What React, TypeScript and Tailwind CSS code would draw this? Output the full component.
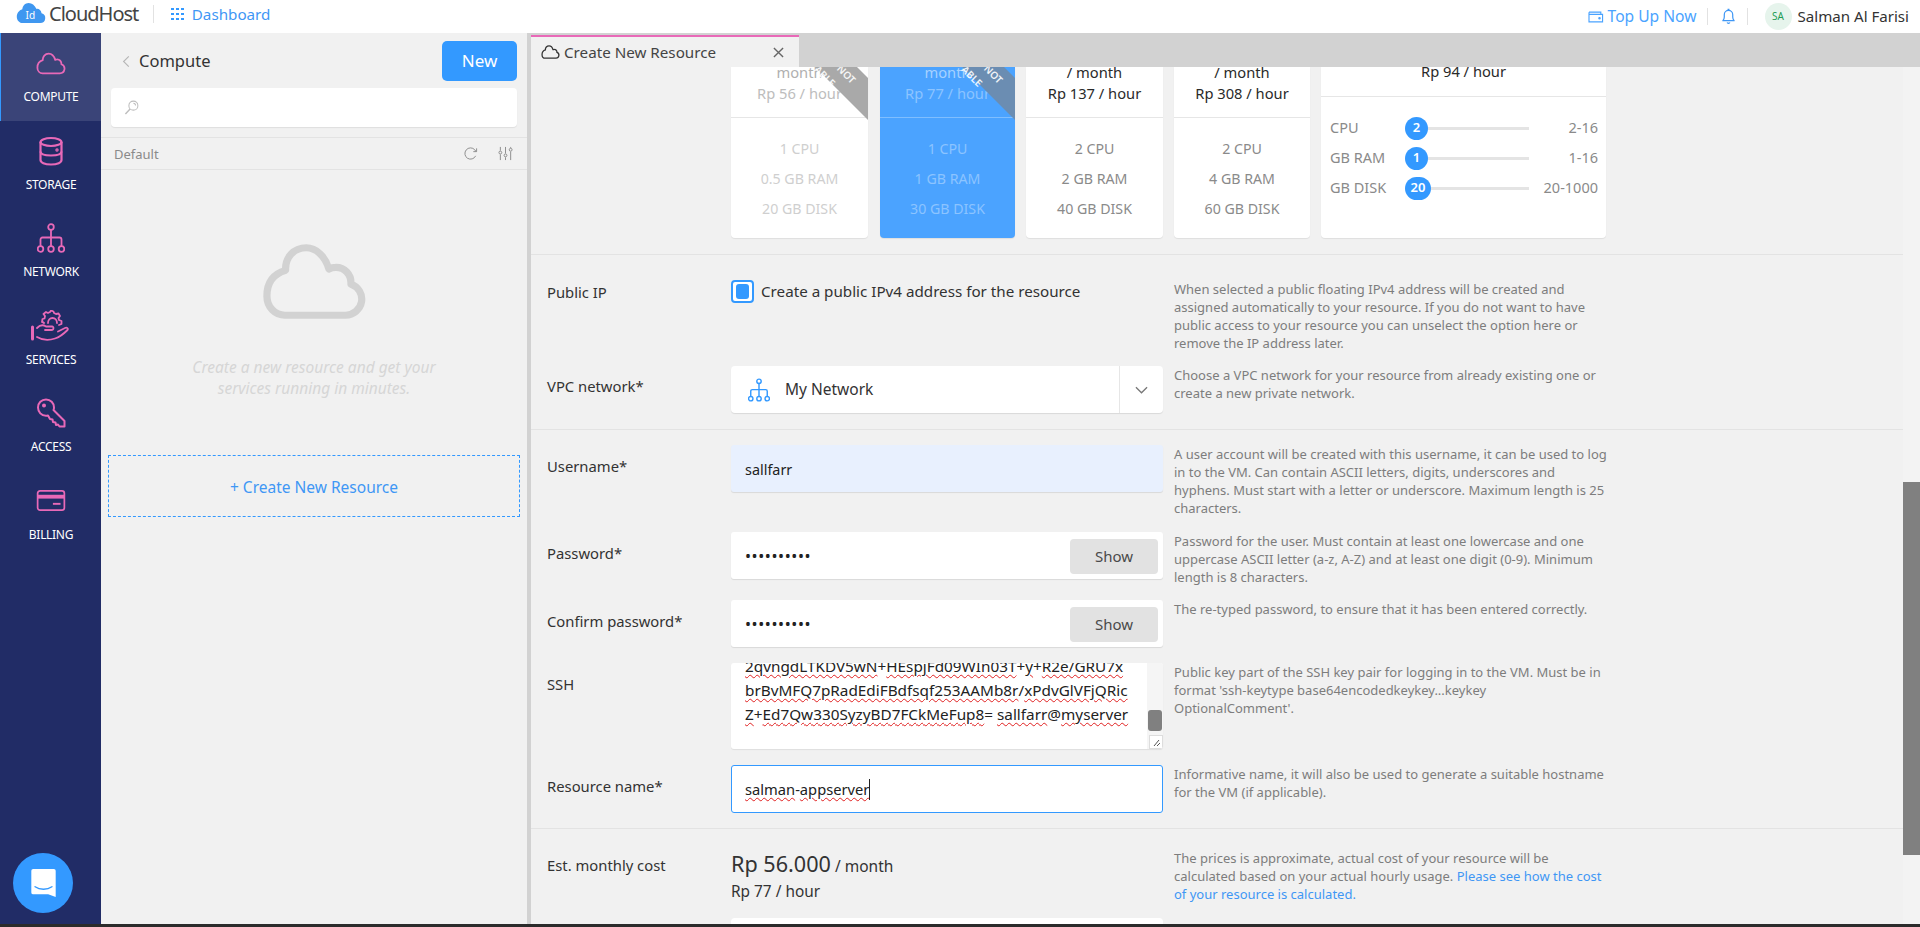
import React from "react";

const P = "#e869b8";

function CloudIcon({ className, color = P, sw = 2, stretch }: { className?: string; color?: string; sw?: number; stretch?: boolean }) {
  return (
    <svg viewBox="0 0 32 24" preserveAspectRatio={stretch ? "none" : undefined} className={className} fill="none" stroke={color} strokeWidth={sw} strokeLinejoin="round" strokeLinecap="round">
      <path d="M7 22.500h18.500a5 5 0 0 0 1.600-9.700c.2-3-2-5.300-4.700-5.200-.7 0-1.400.2-2 .5C19.300 4.200 16.500 1.500 13.500 1.500c-3.800 0-6.500 3-6.300 7C3.800 9.500 1.500 12 1.500 16.500c0 3.500 2.500 6 5.500 6z" />
    </svg>
  );
}

function DiskIcon({ className }: { className?: string }) {
  return (
    <svg viewBox="0 0 24 30" className={className} fill="none" stroke={P} strokeWidth={2.2}>
      <ellipse cx="12" cy="6" rx="10.500" ry="4" />
      <path d="M1.500 6v18c0 2.500 4 4.500 10.500 4.500S22.500 26.500 22.500 24V6" />
      <path d="M1.500 15.500c0 2.500 4 4 10.500 4s10.500-1.500 10.500-4" />
      <circle cx="18" cy="14" r=".6" fill={P} />
    </svg>
  );
}

function NetIcon({ className, color = P }: { className?: string; color?: string }) {
  return (
    <svg viewBox="0 0 28 30" className={className} fill="none" stroke={color} strokeWidth={1.8}>
      <circle cx="14" cy="4" r="2.800" />
      <circle cx="3.500" cy="26" r="2.800" />
      <circle cx="14" cy="26" r="2.800" />
      <circle cx="24.500" cy="26" r="2.800" />
      <path d="M14 7v16M3.500 23v-6.500a2 2 0 0 1 2-2h17a2 2 0 0 1 2 2V23" />
    </svg>
  );
}

function ServiceIcon({ className }: { className?: string }) {
  return (
    <svg viewBox="0 0 40 32" className={className} fill="none" stroke={P} strokeWidth={1.8} strokeLinejoin="round" strokeLinecap="round">
      <path d="M1.500 17v12" strokeWidth={3} />
      <path d="M6 18c3-3 6-3.500 9-1.500h6c2 0 2 3.500-.5 3.500H14" />
      <path d="M6 27c5 3 12 3.500 18 1.500 5-1.500 9-5 12.500-8.500 1-1.500-.5-3-2.500-2l-7 3.500" />
      <path d="M13 13c-1-1-2-1-2-1l.5-3 2-.5.500-2.500-1.500-2L15 2l2 1 2-1 1-1.500 2.500 1L23 3l2 1 2.500-.5L29 6l-1.500 2 .5 2 2.500 1 0 3-2.500 1" />
      <path d="M17 13c0-3 2-5 4.500-5s4.500 2 4.500 5" />
    </svg>
  );
}

function KeyIcon({ className }: { className?: string }) {
  return (
    <svg viewBox="0 0 30 30" className={className} fill="none" stroke={P} strokeWidth={2} strokeLinejoin="round">
      <path d="M2 9.500C2 5 5.500 1.500 10 1.500s8 3.500 8 8c0 1-.1 1.800-.5 2.500L28.500 23v5.500h-5l-1.500-2-2 .5-.5-2.500-2.500-.5-.5-2.500-2.500-.5-2-3.500c-.7.2-1.300.3-2 .3C5.500 17.800 2 14 2 9.500z" />
      <circle cx="8" cy="7.500" r="1" fill={P} />
    </svg>
  );
}

function CardIcon({ className }: { className?: string }) {
  return (
    <svg viewBox="0 0 30 22" className={className} fill="none">
      <rect x="1" y="1" width="28" height="20" rx="2.500" stroke={P} strokeWidth={1.8} />
      <rect x="1" y="5" width="28" height="4" fill={P} />
      <rect x="17" y="13.500" width="8" height="2" fill={P} />
    </svg>
  );
}

function SideItem({ icon, label, active }: { icon: React.ReactNode; label: string; active?: boolean }) {
  return (
    <div className={`h-[87.5px] flex flex-col items-center pt-[12px] border-l ${active ? "bg-[#3a4478] border-[#3399ff]" : "border-transparent"}`}>
      <div className="h-[36px] flex items-center justify-center">{icon}</div>
      <div className="text-[12px] leading-[16px] text-white mt-[8px] tracking-[-0.3px]">{label}</div>
    </div>
  );
}

function Plan({ width, month, hour, cpu, ram, disk, selected, soldout }: { width: string; month: string; hour: string; cpu: string; ram: string; disk: string; selected?: boolean; soldout?: boolean }) {
  const hourTone = soldout ? (selected ? "text-[#8cc4ff]" : "text-[#bdbdbd]") : "text-[#2a2a2a]";
  const monthTone = soldout ? (selected ? "text-[#a5d1ff]" : "text-[#b0b0b0]") : "text-[#2a2a2a]";
  const specTone = soldout ? (selected ? "text-[#8cc4ff]" : "text-[#cfcfcf]") : "text-[#8a8a8a]";
  return (
    <div className={`${width} ${selected ? "bg-[#4ba3ff]" : "bg-white"} h-[171px] relative shrink-0 rounded-b-[4px] overflow-hidden shadow-[0_1px_1px_rgba(0,0,0,0.08)]`}>
      <div className={`h-[51px] overflow-hidden flex flex-col items-center justify-end pb-[13px] text-[14.7px] leading-[21px] border-b ${selected ? "border-[#7fbeff]" : "border-[#e6e6e6]"}`}>
        <div className={`shrink-0 ${monthTone}`}>{month}</div>
        <div className={`shrink-0 ${hourTone}`}>{hour}</div>
      </div>
      <div className={`flex flex-col items-center pt-[16px] text-[14.2px] leading-[30px] ${specTone}`}>
        <div>{cpu}</div>
        <div>{ram}</div>
        <div>{disk}</div>
      </div>
      {soldout && (
        <>
          <svg viewBox="0 0 53 53" className="absolute right-0 top-0 w-[53px] h-[53px]">
            <polygon points="0,0 42,0 53,11 53,53" fill={selected ? "#6b8db2" : "#a9a9a9"} />
          </svg>
          <span className="absolute right-[31px] top-[3px] text-[10px] leading-[12px] font-semibold text-white/90 rotate-45">ABLE</span>
          <span className="absolute right-[11px] top-[1px] text-[10px] leading-[12px] font-semibold text-white/90 rotate-45">NOT</span>
        </>
      )}
    </div>
  );
}

function Slider({ label, value, range, wide }: { label: string; value: string; range: string; wide?: boolean }) {
  return (
    <div className="h-[30px] flex items-center text-[14.5px] text-[#8a8a8a]">
      <div className="w-[84px] pl-[9px]">{label}</div>
      <div className="relative w-[124px] h-[3px] bg-[#e4e4e4]">
        <div className={`absolute left-0 top-[-10px] h-[23px] ${wide ? "w-[26px]" : "w-[23px]"} rounded-full bg-[#3399ff] text-white text-[13px] font-semibold flex items-center justify-center`}>{value}</div>
      </div>
      <div className="flex-1 text-right pr-[8px]">{range}</div>
    </div>
  );
}

function Row({ label, labelClass, children, help, height }: { label: string; labelClass: string; children: React.ReactNode; help?: React.ReactNode; height: string }) {
  return (
    <div className={`flex ${height}`}>
      <div className={`w-[200px] shrink-0 pl-[16px] text-[14.8px] text-[#333333] leading-[20px] ${labelClass}`}>{label}</div>
      <div className="w-[432px] shrink-0">{children}</div>
      <div className="w-[460px] shrink-0 pl-[11px] text-[13px] leading-[18px] text-[#7d7d7d]">{help}</div>
    </div>
  );
}

function Hr() {
  return <div className="w-full h-px bg-[#e3e3e3]" />;
}

function PasswordField() {
  return (
    <div className="h-[47px] bg-white rounded-[3px] flex items-center shadow-[0_1px_1px_rgba(0,0,0,0.1)]">
      <div className="flex-1 pl-[14px] text-[16px] tracking-[0.6px] leading-none text-[#222222]">••••••••••</div>
      <div className="w-[88px] h-[35px] mt-[1px] mr-[5px] bg-[#e2e2e2] rounded-[4px] flex items-center justify-center text-[15px] text-[#4a4a4a]">Show</div>
    </div>
  );
}

function Squiggle({ children }: { children: React.ReactNode }) {
  return <span className="underline decoration-wavy decoration-[#e02020] decoration-1 underline-offset-2">{children}</span>;
}

export default function App() {
  return (
    <div className="h-[927px] w-[1920px] flex flex-col overflow-hidden bg-[#2b2b2b] font-['Noto_Sans','Open_Sans',sans-serif]">
      <header className="h-[33px] shrink-0 bg-white flex items-center">
        <svg viewBox="0 0 32 24" className="w-[32px] h-[22px] ml-[15px] mt-[-8px] shrink-0">
          <path d="M7 23h19a5.500 5.500 0 0 0 1.500-10.800C27 9 24.500 7 22 7.500 20 3.500 17 1 13.500 1 9.500 1 7 4 6.500 8 3 9 .5 12.500.5 16c0 4 3 7 6.500 7z" fill="#3f97f0" />
          <text x="10" y="18.500" fontSize="11" fill="#ffffff" className="font-['Noto_Sans',sans-serif]">Id</text>
        </svg>
        <span className="text-[20px] tracking-[-1px] text-[#444444] ml-[2px] leading-none mt-[-6px]">CloudHost</span>
        <div className="w-px h-[18px] bg-[#e2e2e2] ml-[15px] mt-[-6px]" />
        <div className="grid grid-cols-3 gap-[2.5px] ml-[17px] mt-[-5px]">
          {Array.from({ length: 9 }).map((_, i) => (
            <div key={i} className="w-[2.5px] h-[2.5px] bg-[#3399ff]" />
          ))}
        </div>
        <span className="text-[15.2px] text-[#3f97f5] ml-[8px] mt-[-5px]">Dashboard</span>
        <div className="flex-1" />
        <svg viewBox="0 0 18 16" className="w-[16px] h-[14px]" fill="none" stroke="#4aa3ff" strokeWidth="1.3">
          <path d="M1 2.500h13.500V5M1 2.500v11h15.500V5H1" />
          <circle cx="13" cy="9.500" r=".8" fill="#4aa3ff" />
        </svg>
        <span className="text-[15.6px] text-[#4aa3ff] ml-[4px]">Top Up Now</span>
        <div className="w-px h-[17px] bg-[#e2e2e2] ml-[10px]" />
        <svg viewBox="0 0 16 18" className="w-[15px] h-[17px] ml-[13px]" fill="none" stroke="#3f97f5" strokeWidth="1.3" strokeLinejoin="round">
          <path d="M2 13.500c1-1 1.500-2 1.500-4V7c0-2.500 2-4.500 4.500-4.500s4.500 2 4.500 4.500v2.500c0 2 .5 3 1.500 4z" />
          <path d="M7 1.500h2M6.500 15.500c.5 1 2.500 1 3 0" />
        </svg>
        <div className="w-px h-[17px] bg-[#e2e2e2] ml-[11px]" />
        <div className="w-[27px] h-[27px] rounded-full bg-[#e6f4ec] text-[#1f9d55] text-[10px] flex items-center justify-center ml-[17px]">SA</div>
        <span className="text-[15.1px] text-[#333333] ml-[6px] mr-[11px]">Salman Al Farisi</span>
      </header>

      <div className="h-[891px] shrink-0 flex">
        <nav className="w-[101px] shrink-0 bg-[#212c66] relative">
          <SideItem active label="COMPUTE" icon={<CloudIcon className="w-[30px] h-[23px]" sw={1.9} />} />
          <SideItem label="STORAGE" icon={<DiskIcon className="w-[24px] h-[30px]" />} />
          <SideItem label="NETWORK" icon={<NetIcon className="w-[28px] h-[30px]" />} />
          <SideItem label="SERVICES" icon={<ServiceIcon className="w-[40px] h-[32px]" />} />
          <SideItem label="ACCESS" icon={<KeyIcon className="w-[30px] h-[30px]" />} />
          <SideItem label="BILLING" icon={<CardIcon className="w-[30px] h-[21px]" />} />
          <div className="absolute left-[13px] bottom-[11px] w-[60px] h-[60px] rounded-full bg-[#3399ff] flex items-center justify-center">
            <svg viewBox="0 0 28 32" className="w-[27px] h-[30px]">
              <path d="M3 1h22a2 2 0 0 1 2 2v28l-8-3H3a2 2 0 0 1-2-2V3a2 2 0 0 1 2-2z" fill="#ffffff" />
              <path d="M5 20c5 3.500 13 3.500 18 0" fill="none" stroke="#3399ff" strokeWidth="1.5" strokeLinecap="round" />
            </svg>
          </div>
        </nav>

        <aside className="w-[426px] shrink-0 bg-[#f1f1f1] flex flex-col">
          <div className="h-[48px] flex items-center pt-[8px] pr-[10px]">
            <svg viewBox="0 0 10 16" className="w-[8px] h-[13px] ml-[21px]" fill="none" stroke="#b5b5b5" strokeWidth="1.4"><path d="M8.500 1.500 2 8l6.500 6.500" /></svg>
            <span className="text-[16.5px] text-[#333333] ml-[9px]">Compute</span>
            <div className="flex-1" />
            <div className="w-[75px] h-[40px] bg-[#3399ff] rounded-[5px] text-white text-[17px] flex items-center justify-center">New</div>
          </div>
          <div className="h-[39px] mt-[7px] mx-[10px] bg-white rounded-[4px] shadow-[0_1px_1px_rgba(0,0,0,0.08)] flex items-center pl-[13px]">
            <svg viewBox="0 0 16 16" className="w-[15px] h-[15px]" fill="none" stroke="#bdbdbd" strokeWidth="1.1">
              <circle cx="10" cy="6" r="4.800" /><path d="M6.500 9.500 1.500 15" strokeWidth="1.5" /><path d="M10 3.500c1.300 0 2.300 1 2.300 2.300" />
            </svg>
          </div>
          <div className="h-[33px] mt-[10px] border-y border-[#e3e3e3] flex items-center px-[13px]">
            <span className="text-[13px] text-[#8a8a8a] pt-[2px]">Default</span>
            <div className="flex-1" />
            <svg viewBox="0 0 16 16" className="w-[15px] h-[15px] mr-[20px]" fill="none" stroke="#8a8a8a" strokeWidth="1">
              <path d="M13.500 10.500A6 6 0 1 1 12.500 4L14 6M14.500 2.500V6H11" />
            </svg>
            <svg viewBox="0 0 16 16" className="w-[15px] h-[15px] mr-[1px]" fill="none" stroke="#8a8a8a" strokeWidth="1">
              <path d="M2.500 1v4M2.500 9v6M8 1v7M8 12v3M13.500 1v1M13.500 6v9" />
              <circle cx="2.500" cy="7" r="1.500" /><circle cx="8" cy="10" r="1.500" /><circle cx="13.500" cy="4" r="1.500" />
            </svg>
          </div>
          <div className="flex flex-col items-center pt-[73px]">
            <CloudIcon stretch className="w-[105px] h-[77px]" color="#d2d2d2" sw={2.2} />
            <div className="mt-[37px] text-[15.5px] leading-[21px] italic text-[#d6d6d6] text-center">
              Create a new resource and get your
              <br />
              services running in minutes.
            </div>
          </div>
          <div className="h-[62px] mt-[56px] ml-[7px] mr-[7px] border border-dashed border-[#3399ff] flex items-center justify-center pt-[4px] text-[15.5px] text-[#3f97f5]">
            + Create New Resource
          </div>
        </aside>

        <div className="w-[4px] shrink-0 bg-[#d2d2d2]" />

        <main className="flex-1 flex flex-col min-w-0 bg-[#f1f1f1]">
          <div className="h-[34px] shrink-0 bg-[#d2d2d2] flex items-end">
            <div className="w-[268px] h-[32px] bg-[#f1f1f1] border-t-2 border-[#e869b8] flex items-center pl-[10px] pr-[15px] text-[15.2px] text-[#444444]">
              <CloudIcon className="w-[19px] h-[14px]" color="#333333" sw={2.2} />
              <span className="ml-[4px]">Create New Resource</span>
              <div className="flex-1" />
              <svg viewBox="0 0 12 12" className="w-[11px] h-[11px]" fill="none" stroke="#666666" strokeWidth="1.5"><path d="M1 1l10 10M11 1 1 11" /></svg>
            </div>
          </div>

          <div className="flex-1 min-h-0 flex overflow-hidden">
            <div className="flex-1 min-w-0">
              <div className="ml-[200px] flex gap-[11px] h-[171px]">
                <Plan width="w-[137px]" soldout month="month" hour="Rp 56 / hour" cpu="1 CPU" ram="0.5 GB RAM" disk="20 GB DISK" />
                <div className="w-[135px] ml-[1px] shrink-0">
                  <Plan width="w-[135px]" soldout selected month="month" hour="Rp 77 / hour" cpu="1 CPU" ram="1 GB RAM" disk="30 GB DISK" />
                </div>
                <Plan width="w-[137px]" month="/ month" hour="Rp 137 / hour" cpu="2 CPU" ram="2 GB RAM" disk="40 GB DISK" />
                <Plan width="w-[136px]" month="/ month" hour="Rp 308 / hour" cpu="2 CPU" ram="4 GB RAM" disk="60 GB DISK" />
                <div className="w-[285px] h-[171px] shrink-0 bg-white rounded-b-[4px] shadow-[0_1px_1px_rgba(0,0,0,0.08)]">
                  <div className="h-[30px] overflow-hidden border-b border-[#e6e6e6] flex items-end justify-center pb-[15px] text-[14.7px] leading-[20px] text-[#2a2a2a]">
                    <span className="shrink-0">Rp 94 / hour</span>
                  </div>
                  <div className="pt-[16px]">
                    <Slider label="CPU" value="2" range="2-16" />
                    <Slider label="GB RAM" value="1" range="1-16" />
                    <Slider label="GB DISK" value="20" range="20-1000" wide />
                  </div>
                </div>
              </div>
              <div className="h-[16px]" />
              <Hr />

              <Row label="Public IP" labelClass="pt-[2px]" height="h-[111px] pt-[25px]" help={
                <>When selected a public floating IPv4 address will be created and<br />assigned automatically to your resource. If you do not want to have<br />public access to your resource you can unselect the option here or<br />remove the IP address later.</>
              }>
                <div className="flex items-center">
                  <div className="w-[23px] h-[23px] rounded-[4px] border-2 border-[#3399ff] bg-white flex items-center justify-center">
                    <div className="w-[13px] h-[15px] rounded-[3px] bg-[#3399ff]" />
                  </div>
                  <span className="text-[15.2px] text-[#333333] ml-[7px]">Create a public IPv4 address for the resource</span>
                </div>
              </Row>

              <Row label="VPC network*" labelClass="pt-[10px]" height="h-[63px]" help={<>Choose a VPC network for your resource from already existing one or<br />create a new private network.</>}>
                <div className="h-[47px] bg-white rounded-[4px] shadow-[0_1px_1px_rgba(0,0,0,0.1)] flex items-center">
                  <NetIcon className="w-[22px] h-[24px] ml-[17px]" color="#3399ff" />
                  <span className="ml-[15px] text-[15.5px] text-[#333333]">My Network</span>
                  <div className="flex-1" />
                  <div className="w-[44px] h-full border-l border-[#e6e6e6] flex items-center justify-center">
                    <svg viewBox="0 0 14 8" className="w-[13px] h-[8px]" fill="none" stroke="#777777" strokeWidth="1.4"><path d="M1 1l6 6 6-6" /></svg>
                  </div>
                </div>
              </Row>
              <Hr />

              <div className="h-[15px]" />
              <Row label="Username*" labelClass="pt-[11px]" height="h-[87px]" help={
                <>A user account will be created with this username, it can be used to log<br />in to the VM. Can contain ASCII letters, digits, underscores and<br />hyphens. Must start with a letter or underscore. Maximum length is 25<br />characters.</>
              }>
                <div className="h-[47px] bg-[#e8f0fe] rounded-[3px] flex items-center pl-[14px] pt-[2px] text-[14.4px] text-[#222222] shadow-[0_1px_1px_rgba(0,0,0,0.1)]">sallfarr</div>
              </Row>
              <Row label="Password*" labelClass="pt-[11px]" height="h-[68px]" help={
                <>Password for the user. Must contain at least one lowercase and one<br />uppercase ASCII letter (a-z, A-Z) and at least one digit (0-9). Minimum<br />length is 8 characters.</>
              }>
                <PasswordField />
              </Row>
              <Row label="Confirm password*" labelClass="pt-[11px]" height="h-[63px]" help={<>The re-typed password, to ensure that it has been entered correctly.</>}>
                <PasswordField />
              </Row>
              <Row label="SSH" labelClass="pt-[11px]" height="h-[102px]" help={
                <>Public key part of the SSH key pair for logging in to the VM. Must be in<br />format 'ssh-keytype base64encodedkeykey...keykey<br />OptionalComment'.</>
              }>
                <div className="h-[86px] bg-white rounded-[3px] relative overflow-hidden shadow-[0_1px_1px_rgba(0,0,0,0.08)]">
                  <div className="mt-[-9px] pl-[14px] pr-[30px] text-[15.3px] leading-[24px] text-[#222222] whitespace-nowrap">
                    <div><Squiggle>2qvngdLTKDV5wN</Squiggle>+<Squiggle>HEspjFd09WIn03T</Squiggle>+<Squiggle>y</Squiggle>+<Squiggle>R2e/GRU7x</Squiggle></div>
                    <div><Squiggle>brBvMFQ7pRadEdiFBdfsqf253AAMb8r</Squiggle>/<Squiggle>xPdvGlVFjQRic</Squiggle></div>
                    <div><Squiggle>Z</Squiggle>+<Squiggle>Ed7Qw330SyzyBD7FCkMeFup8</Squiggle>= <Squiggle>sallfarr</Squiggle>@<Squiggle>myserver</Squiggle></div>
                  </div>
                  <div className="absolute right-0 top-0 bottom-0 w-[16px] bg-[#f5f5f5]" />
                  <div className="absolute right-[1px] top-[47px] w-[14px] h-[21px] bg-[#808080] rounded-[3px]" />
                  <div className="absolute right-0 bottom-0 w-[14px] h-[14px] bg-white border border-[#dddddd]">
                    <svg viewBox="0 0 12 12" className="w-full h-full" fill="none" stroke="#555555"><path d="M9 4 4 10M10 7 7 10" /></svg>
                  </div>
                </div>
              </Row>
              <Row label="Resource name*" labelClass="pt-[11px]" height="h-[63px]" help={
                <>Informative name, it will also be used to generate a suitable hostname<br />for the VM (if applicable).</>
              }>
                <div className="h-[48px] bg-white rounded-[3px] border border-[#3399ff] flex items-center pl-[13px] text-[14.7px] text-[#222222]">
                  <Squiggle>salman</Squiggle>-<Squiggle>appserver</Squiggle>
                  <div className="w-px h-[21px] bg-[#222222]" />
                </div>
              </Row>
              <Hr />
              <div className="h-[20px]" />
              <Row label="Est. monthly cost" labelClass="pt-[6px]" height="h-[69px]" help={
                <>The prices is approximate, actual cost of your resource will be<br />calculated based on your actual hourly usage. <span className="text-[#3f97f5]">Please see how the cost<br />of your resource is calculated.</span></>
              }>
                <div className="text-[#333333]">
                  <div className="leading-[30px]"><span className="text-[21.6px]">Rp 56.000</span><span className="text-[15.5px]"> / month</span></div>
                  <div className="text-[15.4px] leading-[21px]">Rp 77 / hour</div>
                </div>
              </Row>
              <div className="ml-[200px] w-[432px] h-[8px] bg-white rounded-t-[4px]" />
            </div>
            <div className="w-[17px] shrink-0 bg-[#f3f3f3] pt-[415px]">
              <div className="h-[373px] bg-[#808080]" />
            </div>
          </div>
        </main>
      </div>
      <div className="h-[3px] shrink-0 bg-[#2b2b2b]" />
    </div>
  );
}
